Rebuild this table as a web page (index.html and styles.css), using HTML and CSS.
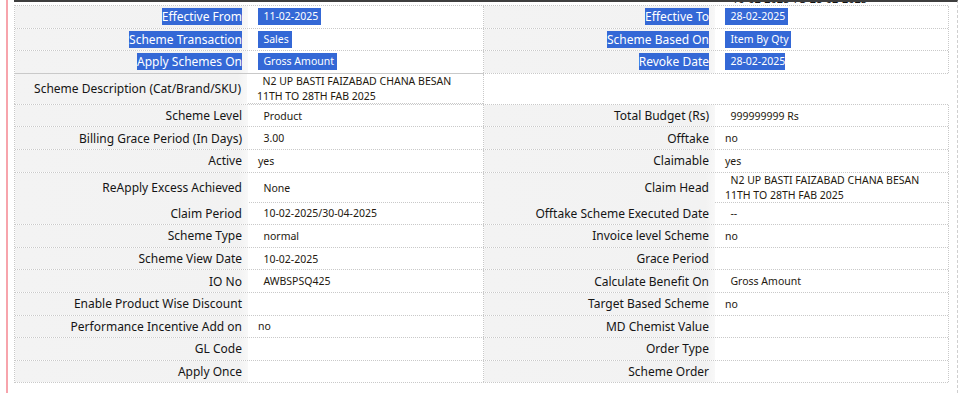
FILE: index.html
```html
<!DOCTYPE html>
<html lang="en">
<head>
    <meta charset="UTF-8">
    <meta name="viewport" content="width=device-width, initial-scale=1.0">
    <title>Scheme Details</title>
    <link rel="stylesheet" href="styles.css">
</head>
<body>
    <div class="frame">
        <div class="side-rule"></div>

        <div class="panel">
            <!-- tail of the period line from the section above -->
            <div class="cut-line"><span>10-02-2025 TO 28-02-2025</span></div>

            <div class="grid-block">
                <div class="row">
                    <div class="cell label"><span class="sel">Effective From</span></div>
                    <div class="cell value split"><span class="sel">&nbsp;&nbsp;11-02-2025&nbsp;</span></div>
                    <div class="cell label"><span class="sel">Effective To</span></div>
                    <div class="cell value end"><span class="sel">&nbsp;&nbsp;28-02-2025&nbsp;</span></div>
                </div>
                <div class="row">
                    <div class="cell label"><span class="sel">Scheme Transaction</span></div>
                    <div class="cell value split"><span class="sel">&nbsp;&nbsp;Sales&nbsp;</span></div>
                    <div class="cell label"><span class="sel">Scheme Based On</span></div>
                    <div class="cell value end"><span class="sel">&nbsp;&nbsp;Item By Qty&nbsp;</span></div>
                </div>
                <div class="row">
                    <div class="cell label"><span class="sel">Apply Schemes On</span></div>
                    <div class="cell value split"><span class="sel">&nbsp;&nbsp;Gross Amount&nbsp;</span></div>
                    <div class="cell label"><span class="sel">Revoke Date</span></div>
                    <div class="cell value end"><span class="sel">&nbsp;&nbsp;28-02-2025</span></div>
                </div>
            </div>

            <div class="row desc-row">
                <div class="cell label">Scheme Description (Cat/Brand/SKU)</div>
                <div class="cell value split multi">&nbsp;&nbsp;N2 UP BASTI FAIZABAD CHANA BESAN<br>11TH TO 28TH FAB 2025</div>
            </div>

            <div class="grid-block">
                <div class="row">
                    <div class="cell label">Scheme Level</div>
                    <div class="cell value split">&nbsp;&nbsp;Product</div>
                    <div class="cell label">Total Budget (Rs)</div>
                    <div class="cell value end">&nbsp;&nbsp;999999999 Rs</div>
                </div>
                <div class="row">
                    <div class="cell label">Billing Grace Period (In Days)</div>
                    <div class="cell value split">&nbsp;&nbsp;3.00</div>
                    <div class="cell label">Offtake</div>
                    <div class="cell value end">no</div>
                </div>
                <div class="row">
                    <div class="cell label">Active</div>
                    <div class="cell value split">yes</div>
                    <div class="cell label">Claimable</div>
                    <div class="cell value end">yes</div>
                </div>
                <div class="row tall">
                    <div class="cell label">ReApply Excess Achieved</div>
                    <div class="cell value split">&nbsp;&nbsp;None</div>
                    <div class="cell label">Claim Head</div>
                    <div class="cell value end multi">&nbsp;&nbsp;N2 UP BASTI FAIZABAD CHANA BESAN<br>11TH TO 28TH FAB 2025</div>
                </div>
                <div class="row">
                    <div class="cell label">Claim Period</div>
                    <div class="cell value split">&nbsp;&nbsp;10-02-2025/30-04-2025</div>
                    <div class="cell label">Offtake Scheme Executed Date</div>
                    <div class="cell value end">&nbsp;&nbsp;--</div>
                </div>
                <div class="row">
                    <div class="cell label">Scheme Type</div>
                    <div class="cell value split">&nbsp;&nbsp;normal</div>
                    <div class="cell label">Invoice level Scheme</div>
                    <div class="cell value end">no</div>
                </div>
                <div class="row">
                    <div class="cell label">Scheme View Date</div>
                    <div class="cell value split">&nbsp;&nbsp;10-02-2025</div>
                    <div class="cell label">Grace Period</div>
                    <div class="cell value end"></div>
                </div>
                <div class="row">
                    <div class="cell label">IO No</div>
                    <div class="cell value split">&nbsp;&nbsp;AWBSPSQ425</div>
                    <div class="cell label">Calculate Benefit On</div>
                    <div class="cell value end">&nbsp;&nbsp;Gross Amount</div>
                </div>
                <div class="row">
                    <div class="cell label">Enable Product Wise Discount</div>
                    <div class="cell value split"></div>
                    <div class="cell label">Target Based Scheme</div>
                    <div class="cell value end">no</div>
                </div>
                <div class="row">
                    <div class="cell label">Performance Incentive Add on</div>
                    <div class="cell value split">no</div>
                    <div class="cell label">MD Chemist Value</div>
                    <div class="cell value end"></div>
                </div>
                <div class="row">
                    <div class="cell label">GL Code</div>
                    <div class="cell value split"></div>
                    <div class="cell label">Order Type</div>
                    <div class="cell value end"></div>
                </div>
                <div class="row">
                    <div class="cell label">Apply Once</div>
                    <div class="cell value split"></div>
                    <div class="cell label">Scheme Order</div>
                    <div class="cell value end"></div>
                </div>
            </div>
        </div>
    </div>
</body>
</html>
```

FILE: styles.css
```css
* {
    margin: 0;
    padding: 0;
    box-sizing: border-box;
}

body {
    font-family: 'Noto Sans', 'Open Sans', sans-serif;
    background: #fff;
    color: #1a1a1a;
    overflow: hidden;
}

.frame {
    display: flex;
    height: 100vh;
}

.side-rule {
    width: 2px;
    margin-left: 6px;
    background: #f7a4ac;
}

.panel {
    width: 944px;
    margin-left: 6px;
    border-top: 2px solid #3e3e3e;
    border-right: 1px dashed #cfcfcf;
}

.cut-line {
    height: 3px;
    overflow: hidden;
    padding-left: 718px;
    font-size: 11px;
    line-height: 1;
    color: #111;
}

.cut-line span {
    display: block;
    margin-top: -9px;
}

.grid-block {
    width: 934px;
    border-left: 1px dotted #c9c9c9;
    border-top: 1px dotted #c9c9c9;
}

.row {
    display: grid;
    grid-template-columns: 233px 236px 231px 234px;
    height: 22.6px;
    border-bottom: 1px dotted #c9c9c9;
}

.row.tall {
    height: 30px;
}

.desc-row {
    width: 469px;
    height: 31px;
    grid-template-columns: 232px 237px;
    border-left: 1px dotted #c9c9c9;
    margin-top: -1px;
    border-top: 1px dotted #c9c9c9;
}

.cell {
    display: flex;
    align-items: center;
    white-space: nowrap;
}

.label {
    justify-content: flex-end;
    padding-right: 6px;
    font-size: 12px;
    color: #151515;
    background: linear-gradient(to right, #f3f3f3 0%, #f2f2f2 96%, #f8f8f8 100%);
}

.value {
    padding-left: 10px;
    font-size: 10.5px;
    color: #24190f;
}

.value.split {
    border-right: 1px dotted #c9c9c9;
}

.value.end {
    border-right: 1px dotted #c9c9c9;
}

.value.multi {
    line-height: 15px;
    white-space: normal;
}

.sel {
    background: #3468d6;
    color: #fff;
    line-height: 17px;
}
```
